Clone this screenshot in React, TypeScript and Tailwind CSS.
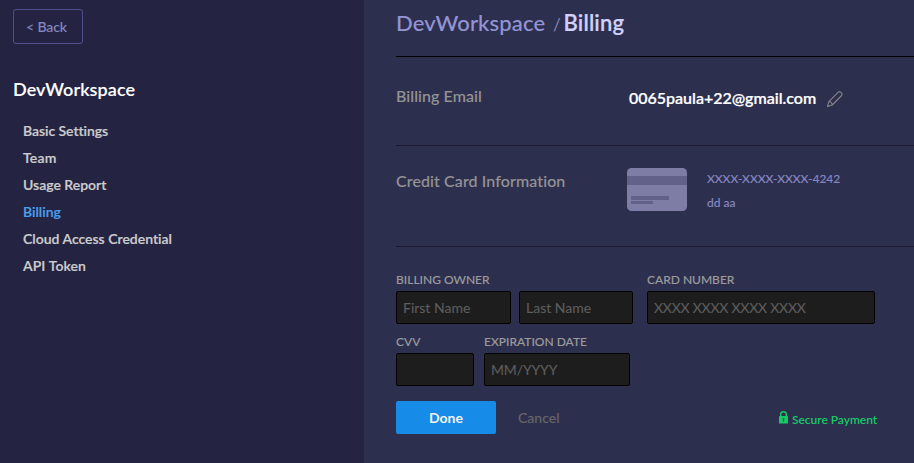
import React from "react";

const navItems = [
  { label: "Basic Settings", tracking: "tracking-[-0.05px]" },
  { label: "Team", tracking: "tracking-[0.2px]" },
  { label: "Usage Report", tracking: "tracking-[0px]" },
  { label: "Billing", active: true, tracking: "tracking-[0px]" },
  { label: "Cloud Access Credential", tracking: "tracking-[0px]" },
  { label: "API Token", tracking: "tracking-[0.1px]" },
];

function Sidebar() {
  return (
    <aside className="w-[364px] shrink-0 bg-[#242442] pl-[13px] pt-[9px]">
      <button className="flex h-[35px] w-[70px] items-center rounded-[3px] border border-[#50508c] pl-[12px] text-[14px] font-medium tracking-[-0.1px] text-[#8787c0] [-webkit-text-stroke:0.1px]">
        &lt; Back
      </button>
      <h2 className="mt-[33px] text-[18px] leading-[24px] font-semibold tracking-[0.08px] text-white [-webkit-text-stroke:0.1px]">
        <span>DevWorkspace</span>
      </h2>
      <nav className="mt-[16px] flex flex-col pl-[10px] [-webkit-text-stroke:0.2px]">
        {navItems.map((item) => (
          <a
            key={item.label}
            className={`h-[27px] text-[14px] leading-[27px] font-semibold ${item.tracking} ${
              item.active ? "text-[#4a9fea]" : "text-[#cdcdcd]"
            }`}
          >
            <span>{item.label}</span>
          </a>
        ))}
      </nav>
    </aside>
  );
}

function PencilIcon() {
  return (
    <svg width="18" height="18" viewBox="0 0 18 18" fill="none" stroke="#858585" strokeWidth="1.1" strokeLinejoin="round">
      <path d="M1.5 16.5 2.9 11.6 12.3 2.2c.7-.7 1.700-.7 2.400 0l.9.9c.7.7.7 1.700 0 2.400L6.300 15Z" />
      <path d="M2.900 11.600 4.700 12 5.900 13.300 6.300 15" />
    </svg>
  );
}

function CardIcon() {
  return (
    <svg width="60" height="43" viewBox="0 0 60 43">
      <rect width="60" height="43" rx="4.5" fill="#7d7da6" />
      <rect y="8" width="60" height="9" fill="#616189" />
      <rect x="4" y="28" width="38" height="4" fill="#616189" />
      <rect x="4" y="33" width="22" height="3" fill="#616189" />
    </svg>
  );
}

function LockIcon() {
  return (
    <svg width="9" height="13" viewBox="0 0 9 13">
      <path d="M1.700 6V3.200a2.800 2.500 0 0 1 5.600 0V6" fill="none" stroke="#17c964" strokeWidth="1.400" />
      <rect y="5" width="9" height="7.500" rx=".6" fill="#17c964" />
      <path d="M3.700 7.200h1.600v1.500H5v2H4v-2h-.3Z" fill="#2b4557" />
    </svg>
  );
}

function Field({ label, placeholder, width, tracking = "" }: { label: string; placeholder: string; width: string; tracking?: string }) {
  return (
    <label className={`flex flex-col justify-end ${width}`}>
      <span className="h-[22px] text-[12px] leading-[22px] font-medium whitespace-nowrap text-[#9b9b9b] [-webkit-text-stroke:0.1px]">
        {label}
      </span>
      <input
        placeholder={placeholder}
        className={`h-[33px] w-full rounded-[2px] border border-black bg-[#1d1d1d] px-[6px] text-[14px] text-white outline-none placeholder:text-[#5d5d5d] [-webkit-text-stroke:0.1px] ${tracking}`}
      />
    </label>
  );
}

export default function App() {
  return (
    <div className="flex h-[463px] w-[914px] overflow-hidden bg-[#2d2f4f] font-['Lato',sans-serif] [font-variant-ligatures:none]">
      <Sidebar />
      <main className="flex-1 pl-[32px]">
        <header className="flex h-[57px] items-baseline border-b border-black pt-[8px] text-[22px] leading-[30px]">
          <span className="w-[157px] font-medium tracking-[0.15px] text-[#9494d4] [-webkit-text-stroke:0.1px]">DevWorkspace</span>
          <span className="w-[10.5px] text-[17px] text-[#8080b8]">/</span>
          <span className="font-semibold tracking-[0.15px] text-[#d0d0fa] [-webkit-text-stroke:0.2px]">Billing</span>
        </header>

        <section className="flex h-[89px] border-b border-[#1c1c2c] pt-[28px]">
          <div className="w-[233px] text-[16px] leading-[22px] font-medium tracking-[0.07px] text-[#949494] [-webkit-text-stroke:0.1px]">
            Billing Email
          </div>
          <div className="mt-px flex h-[26px] items-center text-[16px] font-semibold text-white">
            <span className="-mt-[2px] tracking-[-0.02px] [-webkit-text-stroke:0.2px]">0065paula+22@gmail.com</span>
            <span className="ml-[10px]">
              <PencilIcon />
            </span>
          </div>
        </section>

        <section className="flex h-[101px] border-b border-[#1c1c2c] pt-[22px]">
          <div className="w-[231px] pt-[2px] text-[16px] leading-[22px] font-medium tracking-[0.1px] text-[#949494] [-webkit-text-stroke:0.1px]">
            Credit Card Information
          </div>
          <CardIcon />
          <div className="-mt-px ml-[20px] text-[12px] leading-[24px] font-medium text-[#8787c0] [-webkit-text-stroke:0.1px]">
            <div className="tracking-[-0.04px]">XXXX-XXXX-XXXX-4242</div>
            <div>dd aa</div>
          </div>
        </section>

        <form className="pt-[22px]">
          <div className="flex">
            <Field label="BILLING OWNER" placeholder="First Name" width="w-[115px]" />
            <div className="ml-[8px] flex">
              <Field label="" placeholder="Last Name" width="w-[114px]" />
            </div>
            <div className="ml-[14px] flex">
              <Field label="CARD NUMBER" placeholder="XXXX XXXX XXXX XXXX" width="w-[228px]" tracking="tracking-[-0.24px]" />
            </div>
          </div>
          <div className="mt-[7px] flex gap-[10px]">
            <Field label="CVV" placeholder="" width="w-[78px]" />
            <Field label="EXPIRATION DATE" placeholder="MM/YYYY" width="w-[146px]" tracking="tracking-[-0.15px]" />
          </div>
          <div className="mt-[15px] flex h-[33px] items-center">
            <button type="button" className="h-[33px] w-[100px] rounded-[2px] bg-[#168be8] pb-px text-[14px] font-bold text-[#f4f4f4]">
              Done
            </button>
            <button
              type="button"
              className="ml-[22px] w-[42px] pb-px text-left text-[14px] font-medium text-[#666666] [-webkit-text-stroke:0.1px]"
            >
              Cancel
            </button>
            <div className="ml-[219px] flex items-center gap-[4px] text-[12px] font-semibold text-[#17c964]">
              <LockIcon />
              <span className="pt-[4px] tracking-[-0.03px]">Secure Payment</span>
            </div>
          </div>
        </form>
      </main>
    </div>
  );
}
